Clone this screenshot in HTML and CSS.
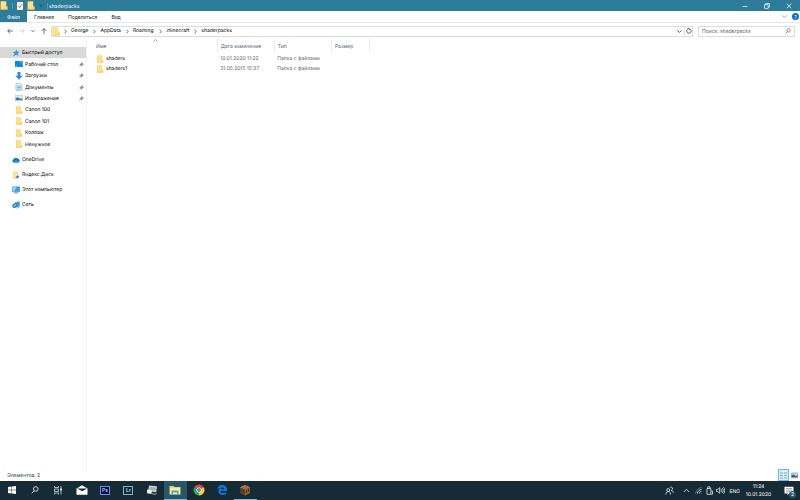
FILE: index.html
```html
<!DOCTYPE html>
<html lang="ru">
<head>
<meta charset="utf-8">
<title>shaderpacks</title>
<link rel="stylesheet" href="styles.css">
</head>
<body>
<svg class="defs" aria-hidden="true">
  <defs>
    <symbol id="folder" viewBox="0 0 8 9"><path d="M.5.5h5.8v5h1.2v3h-7z" fill="#f3d273"/><path d="M1 .5h5v7.5H1z" fill="#ffe08a"/><path d="M6.3 5.5h1.2v3h-7v-.8h5.8z" fill="#f0cb65"/></symbol>
    <symbol id="pin" viewBox="0 0 6 6"><path d="M3.2.5l2.3 2.3-.8.2-1.2 1.3v1L.9 2.7h1L3 1.4zM2.1 4L.4 5.7" fill="#8b949b" stroke="#77818a" stroke-width=".6"/></symbol>
    <symbol id="lens" viewBox="0 0 8 8"><circle cx="4.8" cy="3" r="2.3" fill="none" stroke="currentColor" stroke-width=".8"/><path d="M3.2 4.8L.7 7.3" stroke="currentColor" stroke-width=".9"/></symbol>
    <symbol id="right" viewBox="0 0 3 5"><path d="M.6.7l1.6 1.8L.6 4.3" fill="none" stroke="#555" stroke-width=".8"/></symbol>
    <symbol id="down" viewBox="0 0 5 3"><path d="M.5.5l2 1.8 2-1.8" fill="none" stroke="currentColor" stroke-width=".9"/></symbol>
  </defs>
</svg>
<div class="window">
  <header class="titlebar">
    <div class="quick">
      <svg class="i-folder"><use href="#folder"/></svg><span class="bar"></span>
      <svg class="i-check" viewBox="0 0 6 8"><path d="M0 0h6v8H0z" fill="#f8f4f2"/><path d="M1.3 4l1.3 1.6L4.9 2.5" fill="none" stroke="#e2582d" stroke-width=".9"/></svg>
      <svg class="i-folder"><use href="#folder"/></svg>
      <svg class="i-menu" viewBox="0 0 5 5"><path d="M1 1.2h3M1 2.8h3L2.5 4.2z" fill="#174f64" stroke="#174f64" stroke-width=".5"/></svg><span class="bar"></span>
    </div>
    <h1>shaderpacks</h1>
    <div class="controls">
      <button aria-label="Свернуть"><svg viewBox="0 0 6 6"><path d="M.5 3.5h5"/></svg></button>
      <button aria-label="Восстановить"><svg viewBox="0 0 6 6"><path d="M.5 1.7h3.7v3.7H.5zM1.6 1.5v-1h3.8v3.8h-1"/></svg></button>
      <button aria-label="Закрыть"><svg viewBox="0 0 6 6"><path d="M.7.7l4.6 4.6M5.3.7L.7 5.3"/></svg></button>
    </div>
  </header>
  <nav class="ribbon">
    <button class="file">Файл</button><button>Главная</button><button>Поделиться</button><button>Вид</button>
    <div class="help"><svg class="chev" viewBox="0 0 5 3"><use href="#down"/></svg><button class="question" aria-label="Справка">?</button></div>
  </nav>
  <div class="address">
    <div class="history">
      <button aria-label="Назад"><svg viewBox="0 0 6 6"><path d="M5.8 3H.7M2.8.9L.7 3l2.1 2.1"/></svg></button>
      <button class="off" aria-label="Вперёд"><svg viewBox="0 0 6 6"><path d="M.2 3h5.1M3.2.9L5.3 3 3.2 5.1"/></svg></button>
      <button class="recent" aria-label="Недавние"><svg viewBox="0 0 4 6"><path d="M.5 2.2L2 3.7l1.5-1.5"/></svg></button>
      <button aria-label="Вверх"><svg viewBox="0 0 6 6"><path d="M3 5.8V.7M.9 2.8L3 .7l2.1 2.1"/></svg></button>
    </div>
    <div class="path">
      <svg class="i-folder"><use href="#folder"/></svg>
      <svg class="sep"><use href="#right"/></svg><a href="#">George</a>
      <svg class="sep"><use href="#right"/></svg><a href="#">AppData</a>
      <svg class="sep"><use href="#right"/></svg><a href="#">Roaming</a>
      <svg class="sep"><use href="#right"/></svg><a href="#">.minecraft</a>
      <svg class="sep"><use href="#right"/></svg><a href="#">shaderpacks</a>
      <div class="refresh"><svg class="chev"><use href="#down"/></svg><button aria-label="Обновить"><svg viewBox="0 0 6 6"><path d="M1.5 1.4A2.2 2.2 0 1 0 4.3 1.3M1.3.5h2v1.8"/></svg></button></div>
    </div>
    <label class="search"><input type="text" placeholder="Поиск: shaderpacks" aria-label="Поиск"><svg><use href="#lens"/></svg></label>
  </div>
  <div class="content">
    <aside class="sidebar">
      <ul class="pinned">
        <li class="top active"><svg class="ic" viewBox="0 0 8 8"><path d="M4.6.6l.8 2 2.2.2-1.7 1.5.5 2.6-2-1.2L1 7.2l1.5-2.6L.9 3l2.3-.3z" fill="#2d9be3"/></svg><a href="#">Быстрый доступ</a></li>
        <li><svg class="ic" viewBox="0 0 8 8"><path d="M0 1h8v6H0z" fill="#0788dc"/><path d="M4 1h4v6z" fill="#27a3f0"/><path d="M.8 6h1" stroke="#a7e0ff"/></svg><a href="#">Рабочий стол</a><svg class="pin"><use href="#pin"/></svg></li>
        <li><svg class="ic" viewBox="0 0 8 8"><path d="M2.5 0h3v3.8h2.3L4 7.8.2 3.8h2.3z" fill="#2f8cda"/></svg><a href="#">Загрузки</a><svg class="pin"><use href="#pin"/></svg></li>
        <li><svg class="ic" viewBox="0 0 8 8"><path d="M1 .4h4.5L7 2v5.6H1z" fill="#edf6fb" stroke="#8da5b4" stroke-width=".6"/><path d="M2 3h4M2 4.5h4M2 6h4" stroke="#57acd7" stroke-width=".8"/></svg><a href="#">Документы</a><svg class="pin"><use href="#pin"/></svg></li>
        <li><svg class="ic" viewBox="0 0 8 8"><path d="M.3 1.3h7.4v5.4H.3z" fill="#d9effb" stroke="#9daeb8" stroke-width=".5"/><path d="M.7 6V4.2l2-1 2 1.2 2.6.3V6z" fill="#37688c"/><path d="M.7 5.8h6.6" stroke="#4ba4db" stroke-width=".7"/></svg><a href="#">Изображения</a><svg class="pin"><use href="#pin"/></svg></li>
        <li><svg class="ic"><use href="#folder"/></svg><a href="#">Canon 100</a></li>
        <li><svg class="ic"><use href="#folder"/></svg><a href="#">Canon 101</a></li>
        <li><svg class="ic"><use href="#folder"/></svg><a href="#">Коллаж</a></li>
        <li><svg class="ic"><use href="#folder"/></svg><a href="#">Ненужное</a></li>
      </ul>
      <ul class="places">
        <li class="top"><svg class="ic" viewBox="0 0 8 8"><path d="M1.8 6.5a1.7 1.7 0 0 1-.2-3.3A2.5 2.5 0 0 1 6 2.8a1.9 1.9 0 0 1 .3 3.7z" fill="#0d75ca"/><path d="M1 6l3.2-2 2.6 2.4H1.8z" fill="#239be6"/></svg><a href="#">OneDrive</a></li>
        <li class="top"><svg class="ic" viewBox="0 0 8 9"><path d="M.5.5h5.8v8H.5z" fill="#ffe08a"/><path d="M3.5 4.5h4V9h-4z" fill="#f7fbfd"/><path d="M4 8.4c0-2 .5-2.6 1.7-2.6V4.9L7.5 6.4 5.7 7.8V7C5 7 4.6 7.5 4 8.4z" fill="#1170c5" stroke="#1170c5" stroke-width=".4"/></svg><a href="#">Яндекс.Диск</a></li>
        <li class="top"><svg class="ic" viewBox="0 0 8 8"><path d="M.3.8h7.4v4.9H.3z" fill="#35a5e6" stroke="#4b7894" stroke-width=".5"/><path d="M.6 1h4L2.2 5.4H.6z" fill="#8ed3fa"/><path d="M1.5 7h5M4 5.7V7" stroke="#7597aa" stroke-width=".8"/></svg><a href="#">Этот компьютер</a></li>
        <li class="top"><svg class="ic" viewBox="0 0 8 8"><path d="M2.7 1.4L7.7.5v5l-5 .8z" fill="#2c9bd8"/><circle cx="2.5" cy="4.8" r="2.3" fill="#267bb5"/><path d="M1 4l2.2-1 .9 1.6-1.7 1.5z" fill="#79c7ec"/><path d="M4.5 7l2.7-.6" stroke="#718e9d" stroke-width=".7"/></svg><a href="#">Сеть</a></li>
      </ul>
    </aside>
    <main>
      <svg class="sort" viewBox="0 0 5 3"><path d="M.5 2.5l2-1.8 2 1.8" fill="none" stroke="#777" stroke-width=".7"/></svg>
      <table>
        <colgroup><col class="c-name"><col class="c-date"><col class="c-type"><col class="c-size"></colgroup>
        <thead><tr><th>Имя</th><th>Дата изменения</th><th>Тип</th><th>Размер</th></tr></thead>
        <tbody>
          <tr><td><span class="name"><svg class="ic"><use href="#folder"/></svg>shaders</span></td><td>10.01.2020 11:22</td><td>Папка с файлами</td><td></td></tr>
          <tr><td><span class="name"><svg class="ic"><use href="#folder"/></svg>shaders1</span></td><td>31.05.2015 15:37</td><td>Папка с файлами</td><td></td></tr>
        </tbody>
      </table>
    </main>
  </div>
  <footer class="status"><span>Элементов: 2</span>
    <div class="views">
      <button class="on" aria-label="Таблица"><svg viewBox="0 0 9 9"><path d="M1 2h3M1 4.5h3M1 7h3M5 2h3M5 4.5h3M5 7h3" stroke="#7b929f" stroke-width=".8"/></svg></button>
      <button aria-label="Эскизы"><svg viewBox="0 0 9 9"><path d="M1.3 2h6.4v4.8H1.3z" fill="#b9dff5" stroke="#7c8c96" stroke-width=".6"/><path d="M1.6 6.3V4.6l2-1 2 1.4 1.8-.5v1.8z" fill="#315b83"/></svg></button>
    </div>
  </footer>
</div>
<div class="taskbar">
  <div class="apps">
    <button aria-label="Пуск"><svg viewBox="0 0 12 12"><path d="M2 3l3.6-.5v3.2H2zM6 2.4l4-.5v3.8H6zM2 6.2h3.6v3.3L2 9zM6 6.2h4V10l-4-.5z" fill="#fff"/></svg></button>
    <button class="find" aria-label="Поиск"><svg><use href="#lens"/></svg></button>
    <button aria-label="Представление задач"><svg viewBox="0 0 12 12"><path d="M2.5 2v1.5h4V2M2.5 5h4v2.5h-4zM2.5 10.5V9h4v1.5M9 2v8.5" fill="none" stroke="#d3dcdf" stroke-width=".8"/><path d="M8.3 4.5h1.5v2H8.3z" fill="#fff"/></svg></button>
    <button aria-label="Почта"><svg viewBox="0 0 12 12"><path d="M.5 4.5L6 1.2l5.5 3.3v6.3H.5z" fill="#fff"/><path d="M1 4.6h10L6.4 7.3z" fill="#182b35"/></svg></button>
    <button class="adobe ps"><span>Ps</span></button>
    <button class="adobe lr"><span>Lr</span></button>
    <button aria-label="Монитор"><svg viewBox="0 0 12 12"><path d="M3 1.5l8 .7-.8 6-8-1z" fill="#c9d2d5"/><path d="M4 3l5.7.4-.5 3.4-5.6-.6z" fill="#a3afb5"/><path d="M1 5.5l5 .8-.5 3.8-4.5-.9z" fill="#e9eeee"/><path d="M6 9.7l3.5.7 1-1.5" fill="none" stroke="#a7b2b5"/></svg></button>
    <button class="current" aria-label="Проводник"><svg viewBox="0 0 12 12"><path d="M.5 2h4l1 1h6v7.5H.5z" fill="#f4cf61"/><path d="M1 4h10v6.2H1z" fill="#ffeaa0"/><path d="M2.5 6.5h7v4H8v-2H4v2H2.5z" fill="#43a5d8"/></svg></button>
    <button aria-label="Chrome"><svg viewBox="0 0 12 12"><path d="M6 6L1.2 3.3A5.5 5.5 0 0 1 10.8 3.3z" fill="#e84435"/><path d="M6 6l4.8-2.7A5.5 5.5 0 0 1 6 11.5z" fill="#fbcd27"/><path d="M6 6v5.5A5.5 5.5 0 0 1 1.2 3.3z" fill="#29a84e"/><circle cx="6" cy="6" r="2.6" fill="#fff"/><circle cx="6" cy="6" r="2" fill="#4288ee"/></svg></button>
    <button aria-label="Edge"><svg viewBox="0 0 12 12"><path d="M1 5.5C1.7 2.6 3.5 1 6.2 1 9.5 1 11 3.3 11 6v.9H4.5c.2 2.3 3.3 2.6 5.6 1.2v2.2C6.7 12 2.5 11 2.4 7.3c0-1.7.8-2.9 2-3.5C3 4 1.8 4.6 1 5.5zm3.6-.2h3.7C8.2 2.8 4.7 2.8 4.6 5.3z" fill="#087bd7"/></svg></button>
    <button class="open" aria-label="Minecraft"><svg viewBox="0 0 12 12"><path d="M1 3.2L6 1l5 2.2v5.7l-5 2.6-5-2.6z" fill="#69452f"/><path d="M1 3.2L6 1l5 2.2-5 2.2z" fill="#b98350"/><path d="M6 5.4l5-2.2v5.7l-5 2.6z" fill="#8c603b"/><path d="M2 5v3M4.3 6v3M7.5 6v3M9.5 4.8v3" stroke="#2e2722" stroke-width=".9"/><path d="M3 4.2l5-2M5.5 4.8l3-1.4" stroke="#714a2e" stroke-width=".6"/></svg></button>
  </div>
  <div class="tray">
    <svg viewBox="0 0 9 9"><circle cx="3.2" cy="4" r="1.5"/><path d="M.8 8.5c.2-4 4.6-4 4.8 0M5 1.8a1.4 1.4 0 1 1 1.5 2.1M6 4.5c1.7-.1 2.2 1 2.3 2.3"/></svg>
    <svg class="up" viewBox="0 0 9 9"><path d="M1.8 6l2.7-2.7L7.2 6"/></svg>
    <svg class="wifi" viewBox="0 0 9 9"><path d="M1.5 7.5C2 4.5 4.5 2 7.5 1.5" opacity=".5"/><path d="M3.3 7.5c.3-2 2.2-3.9 4.2-4.2M5.2 7.5c.2-1.2 1.1-2.1 2.3-2.3M7.2 7.5v-.4"/></svg>
    <svg viewBox="0 0 9 9"><path d="M2 2.5h3.8v5.8H2zM2.8 2.5V.8H5v1.7M6 5h1.5v3.2H6"/></svg>
    <svg class="sound" viewBox="0 0 9 9"><path d="M.5 3.4h1.3L3.7 1.7v5.6L1.8 5.6H.5zM5 3.1c.7.7.7 2.1 0 2.8M6.2 2.1c1.3 1.3 1.3 3.5 0 4.8M7.5 1.2c1.7 1.8 1.7 4.8 0 6.6"/></svg>
    <span class="lang">ENG</span>
    <div class="clock"><time>11:24</time><time>10.01.2020</time></div>
    <button class="notes" aria-label="Уведомления"><svg viewBox="0 0 10 10"><path d="M.5.8h9v6.8H5L3.5 9.3V7.6h-3z" fill="#fff"/><path d="M2 2.6h6M2 4.2h6M2 5.8h4" stroke="#61717a" stroke-width=".6"/></svg><span>2</span></button>
  </div>
</div>
</body>
</html>
```
FILE: styles.css
```css
* { box-sizing: border-box; }
body { margin: 0; min-height: 100vh; display: flex; flex-direction: column; background: #fff; color: #000; font: 5px/8px Inter, "Open Sans", sans-serif; text-rendering: geometricPrecision; }
button { margin: 0; padding: 0; border: 0; background: none; font: inherit; color: inherit; display: flex; align-items: center; justify-content: center; }
a { color: inherit; text-decoration: none; }
svg { display: block; flex: none; }
ul { list-style: none; margin: 0; padding: 0; }
.defs { position: absolute; width: 0; height: 0; }
.window { flex: 1; display: flex; flex-direction: column; }
.i-folder { width: 8px; height: 9px; }
.chev { width: 5px; height: 3px; }

.titlebar { height: 11px; background: #2d7d9a; color: #fff; display: flex; align-items: center; }
.quick { display: flex; align-items: center; gap: 4px; }
.bar { width: 1px; height: 6px; background: #5b9cb3; }
.i-check { width: 6px; height: 8px; }
.i-menu { width: 4px; height: 5px; }
.titlebar h1 { margin: 0 0 0 1px; padding-top: 2px; font: inherit; }
.controls { margin-left: auto; display: flex; }
.controls button { width: 22px; height: 11px; }
.controls svg { width: 6px; height: 6px; fill: none; stroke: #fff; stroke-width: .7; }

.ribbon { height: 12px; display: flex; border-bottom: 1px solid #e8e8e8; color: #222; }
.ribbon button { padding: 0 7px; }
.ribbon .file { width: 27px; background: #2d7d9a; color: #fff; }
.help { margin-left: auto; display: flex; align-items: center; gap: 5px; color: #999; padding-right: 1px; }
.ribbon .question { width: 7px; height: 7px; padding: 0; border-radius: 50%; background: #0870c6; color: #fff; }

.address { display: flex; align-items: center; height: 16px; padding-right: 5px; gap: 5px; }
.history { display: flex; width: 46px; padding-left: 7px; gap: 6px; }
.history svg, .refresh button svg { width: 6px; height: 6px; fill: none; stroke: #444; stroke-width: .8; }
.history .off svg { stroke: #ccc; }
.history .recent svg { width: 4px; }
.path { flex: 1; display: flex; align-items: center; height: 11px; border: 1px solid #ddd; }
.sep { width: 3px; height: 5px; margin: 0 4px; }
.path a + .sep { margin-left: 5px; }
.refresh { margin-left: auto; display: flex; align-items: center; align-self: stretch; gap: 2px; color: #444; }
.refresh button { width: 8px; align-self: stretch; border-left: 1px solid #e5e5e5; }
.search { width: 97px; height: 11px; display: flex; align-items: center; border: 1px solid #ddd; padding: 0 3px; color: #555; }
.search input { flex: 1; min-width: 0; height: 9px; padding: 0; border: 0; outline: 0; background: none; font: inherit; }
.search input::placeholder { color: #666; opacity: 1; }
.search svg { width: 6px; height: 6px; }

.content { flex: 1; display: flex; }
.sidebar { width: 87px; padding-top: 8px; border-right: 1px solid #f2f2f2; }
.sidebar a { padding-top: 1px; }
.pinned { height: 103px; display: flex; flex-direction: column; }
.sidebar li { display: flex; align-items: center; flex: 1; padding-left: 15px; gap: 2px; }
.sidebar .top { padding-left: 12px; }
.sidebar .active { background: #d9d9d9; }
.ic { width: 8px; height: 8px; }
.pin { width: 5px; height: 5px; margin: 0 2px 0 auto; }
.places { display: flex; flex-direction: column; gap: 4px; padding-top: 4px; }
.places li { min-height: 11px; }

main { position: relative; flex: 1; }
.sort { position: absolute; left: 66px; top: 0; width: 5px; height: 3px; }
table { width: 283px; table-layout: fixed; border-collapse: collapse; color: #666; }
.c-name { width: 130px; }
.c-date, .c-type { width: 57px; }
.c-size { width: 38px; }
th, td { padding: 2px 0 0 3px; height: 10px; text-align: left; font-weight: 400; white-space: nowrap; }
th { height: 13px; border-right: 1px solid #ebebeb; color: #4c5b70; }
th:first-child, td:first-child { padding-left: 9px; }
tbody::before { content: ""; display: block; height: 1px; }
.name { display: flex; align-items: center; gap: 2px; color: #000; }

.status { height: 12px; display: flex; align-items: center; justify-content: space-between; padding-left: 7px; color: #24354e; }
.status span { padding-top: 2px; }
.views { display: flex; align-self: stretch; }
.views button { width: 11px; border: 1px solid transparent; }
.views .on { background: #d5effb; border-color: #69b9e4; }
.views svg { width: 9px; height: 9px; }

.taskbar { height: 19px; display: flex; justify-content: space-between; background: #162b36; color: #fff; }
.apps { width: 257px; display: flex; }
.apps button { flex: 1; border-bottom: 1px solid transparent; }
.apps svg { width: 12px; height: 12px; }
.apps .find svg { width: 8px; height: 8px; }
.apps .current { background: #255768; border-color: #78bddc; }
.apps .open { border-color: #78bddc; }
.adobe span { width: 10px; height: 9px; border: 1px solid #6b8cf0; background: #070b3c; color: #b4c4ff; font-weight: 600; line-height: 7px; }
.lr span { border-color: #8bb3c3; background: #102935; color: #c5e3ee; }
.tray { display: flex; align-items: center; gap: 2px; }
.tray > svg { width: 9px; height: 9px; fill: none; stroke: #e8edef; stroke-width: .8; }
.tray .up { margin-left: 6px; }
.tray .wifi { margin-left: 1px; }
.lang { margin-left: 2px; padding-top: 2px; }
.clock { display: flex; flex-direction: column; align-items: center; width: 33px; padding-top: 1px; }
.notes { position: relative; width: 23px; height: 19px; }
.notes svg { width: 10px; height: 10px; }
.notes span { position: absolute; right: 4px; bottom: 2px; width: 7px; height: 7px; border-radius: 50%; background: #275d70; line-height: 7px; }
```
